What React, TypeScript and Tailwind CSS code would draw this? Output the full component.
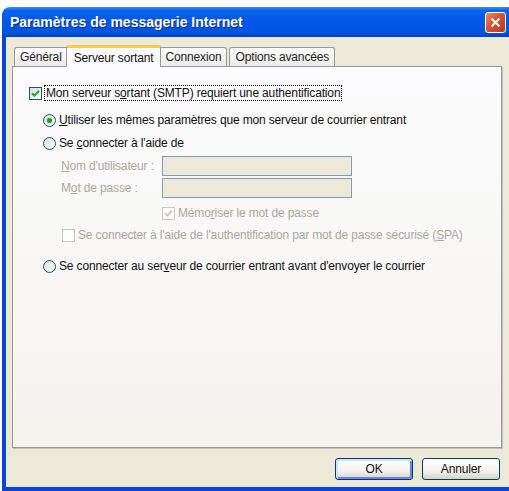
import React from 'react';

const Check = ({ checked, disabled }: { checked?: boolean; disabled?: boolean }) => (
    <span
        className={`w-[13px] h-[13px] shrink-0 border flex items-center justify-center ${
            disabled
                ? 'border-[#cac8bb] bg-white'
                : 'border-[#1c5180] bg-[linear-gradient(135deg,#dcdcd7,#ffffff)]'
        }`}
    >
        {checked && (
            <svg width="9" height="9" viewBox="0 0 9 9">
                <path
                    d="M1 4.2 L3.4 6.6 L8 1.8"
                    fill="none"
                    stroke={disabled ? '#cac8bb' : '#21a121'}
                    strokeWidth="2"
                />
            </svg>
        )}
    </span>
);

const Radio = ({ checked }: { checked?: boolean }) => (
    <span className="w-[13px] h-[13px] shrink-0 rounded-full border border-[#1c5180] bg-[linear-gradient(135deg,#dcdcd7,#ffffff)] flex items-center justify-center">
        {checked && <span className="w-[5px] h-[5px] rounded-full bg-[#21a121] shadow-[0_0_1px_#5fd35f]" />}
    </span>
);

const Tab = ({ label, active }: { label: string; active?: boolean }) =>
    active ? (
        <div className="h-[22px] -mb-[1px] -mx-[2px] relative z-10 px-[7px] pt-[3px] bg-[#fcfcfe] border-x border-[#919b9c] rounded-t-[3px] border-t-[3px] border-t-[#ffc83c] flex items-start">
            <span className="leading-[15px]">{label}</span>
        </div>
    ) : (
        <div className="h-[19px] px-[5px] bg-[linear-gradient(180deg,#ffffff,#ecebe6)] border border-b-0 border-[#919b9c] rounded-t-[3px] flex items-center text-[#222]">
            {label}
        </div>
    );

const App = () => {
    return (
        <div
            className="w-[509px] h-[491px] bg-white overflow-hidden pt-[7px] pl-[2px] text-[12px] tracking-[-0.15px] text-[#111]"
            style={{ fontFamily: '"Liberation Sans", Arial, sans-serif' }}
        >
            <div className="w-[520px] h-[484px] flex flex-col rounded-t-[8px] overflow-hidden">
                {/* Title bar */}
                <div className="h-[30px] shrink-0 bg-[linear-gradient(180deg,#3d8df7_0%,#0a61eb_12%,#0058e6_50%,#0054e0_85%,#0040c8_100%)] flex items-center justify-between pl-[8px] pr-[16px]">
                    <span className="text-white font-bold text-[14px] tracking-normal [text-shadow:1px_1px_#0b2a8a]">
                        Paramètres de messagerie Internet
                    </span>
                    <div className="w-[21px] h-[21px] rounded-[3px] border border-white bg-[linear-gradient(135deg,#f08a6c,#d8502f_45%,#b93a1f)] flex items-center justify-center">
                        <svg width="11" height="11" viewBox="0 0 11 11">
                            <path d="M1.5 1.5 L9.5 9.5 M9.5 1.5 L1.5 9.5" stroke="white" strokeWidth="2" />
                        </svg>
                    </div>
                </div>

                {/* Body */}
                <div className="flex-1 flex flex-col bg-[#ece9d8] border-l-[4px] border-r-[4px] border-b-[4px] border-[#0846d8]">
                    {/* Tabs */}
                    <div className="flex items-end h-[29px] pl-[8px] shrink-0">
                        <Tab label="Général" />
                        <Tab label="Serveur sortant" active />
                        <Tab label="Connexion" />
                        <div className="w-[2px]" />
                        <Tab label="Options avancées" />
                    </div>

                    {/* Panel */}
                    <div className="ml-[6px] w-[490px] h-[382px] shrink-0 border border-[#919b9c] shadow-[1px_1px_0_#c5c2b2] bg-[linear-gradient(180deg,#fcfcfe,#f4f3ee)] pl-[16px] pt-[18px] flex flex-col">
                        <div className="h-[16px] flex items-center gap-[2px]">
                            <Check checked />
                            <span className="border border-dotted border-black px-[1px] leading-[14px]">
                                Mon serveur s<u>o</u>rtant (SMTP) requiert une authentification
                            </span>
                        </div>

                        <div className="h-[16px] mt-[11px] ml-[14px] flex items-center gap-[3px]">
                            <Radio checked />
                            <span>
                                <u>U</u>tiliser les mêmes paramètres que mon serveur de courrier entrant
                            </span>
                        </div>

                        <div className="h-[16px] mt-[7px] ml-[14px] flex items-center gap-[3px]">
                            <Radio />
                            <span>
                                Se <u>c</u>onnecter à l'aide de
                            </span>
                        </div>

                        <div className="h-[20px] mt-[5px] ml-[32px] flex items-center text-[#aca899]">
                            <span className="w-[101px]">
                                <u>N</u>om d'utilisateur :
                            </span>
                            <div className="w-[190px] h-[20px] border border-[#7f9db9] bg-[#ece9d8]" />
                        </div>

                        <div className="h-[20px] mt-[2px] ml-[32px] flex items-center text-[#aca899]">
                            <span className="w-[101px]">
                                M<u>o</u>t de passe :
                            </span>
                            <div className="w-[190px] h-[20px] border border-[#7f9db9] bg-[#ece9d8]" />
                        </div>

                        <div className="h-[16px] mt-[7px] ml-[133px] flex items-center gap-[3px] text-[#aca899]">
                            <Check checked disabled />
                            <span>
                                Mémo<u>r</u>iser le mot de passe
                            </span>
                        </div>

                        <div className="h-[16px] mt-[6px] ml-[33px] flex items-center gap-[3px] text-[#aca899]">
                            <Check disabled />
                            <span>
                                Se connecter à l'aide de l'authentification par mot de passe sécurisé (<u>S</u>PA)
                            </span>
                        </div>

                        <div className="h-[16px] mt-[15px] ml-[14px] flex items-center gap-[3px]">
                            <Radio />
                            <span>
                                Se connecter au ser<u>v</u>eur de courrier entrant avant d'envoyer le courrier
                            </span>
                        </div>
                    </div>

                    {/* Buttons */}
                    <div className="flex justify-end gap-[9px] pr-[18px] mt-[10px]">
                        <button className="w-[78px] h-[22px] rounded-[3px] border border-[#003c74] bg-[linear-gradient(180deg,#ffffff_0%,#f3f2ee_60%,#d8d2c6_100%)] shadow-[inset_1px_1px_0_1px_#cee7ff,inset_-1px_-1px_0_1px_#6982ee]">
                            OK
                        </button>
                        <button className="w-[78px] h-[22px] rounded-[3px] border border-[#003c74] bg-[linear-gradient(180deg,#ffffff_0%,#f3f2ee_60%,#d8d2c6_100%)]">
                            Annuler
                        </button>
                    </div>
                </div>
            </div>
        </div>
    );
};

export default App;
